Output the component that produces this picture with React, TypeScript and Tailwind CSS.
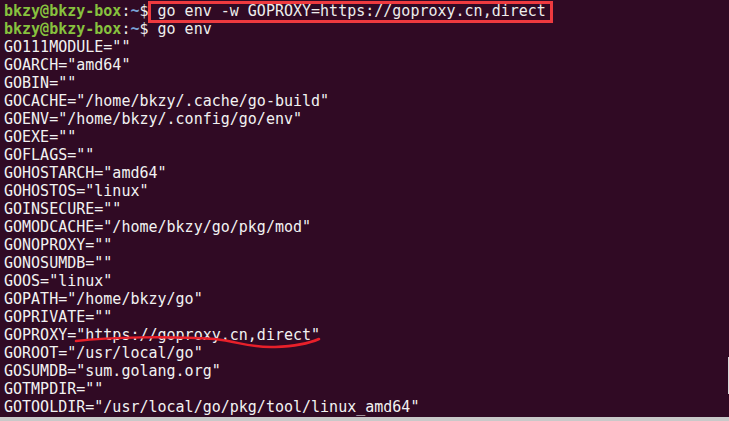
const PROMPT_USER = "bkzy@bkzy-box";

const LINES = [
  'GO111MODULE=""',
  'GOARCH="amd64"',
  'GOBIN=""',
  'GOCACHE="/home/bkzy/.cache/go-build"',
  'GOENV="/home/bkzy/.config/go/env"',
  'GOEXE=""',
  'GOFLAGS=""',
  'GOHOSTARCH="amd64"',
  'GOHOSTOS="linux"',
  'GOINSECURE=""',
  'GOMODCACHE="/home/bkzy/go/pkg/mod"',
  'GONOPROXY=""',
  'GONOSUMDB=""',
  'GOOS="linux"',
  'GOPATH="/home/bkzy/go"',
  'GOPRIVATE=""',
  'GOPROXY="https://goproxy.cn,direct"',
  'GOROOT="/usr/local/go"',
  'GOSUMDB="sum.golang.org"',
  'GOTMPDIR=""',
  'GOTOOLDIR="/usr/local/go/pkg/tool/linux_amd64"',
];

function Prompt({ cmd }: { cmd: string }) {
  return (
    <div className="whitespace-pre">
      <span className="font-bold text-[#87c13e]">{PROMPT_USER}</span>
      <span className="text-[#eeeeec]">:</span>
      <span className="font-bold text-[#7aa2d6]">~</span>
      <span className="text-[#eeeeec]">$ {cmd}</span>
    </div>
  );
}

export default function App() {
  return (
    <div className="flex h-[421px] w-[729px] flex-col overflow-hidden bg-[#c9c9c9]">
      <div
        className="relative h-[417px] bg-[#300a24] pl-[4px] pt-[2px] text-[15px] leading-[18px] text-[#f2f2f2]"
        style={{ fontFamily: '"DejaVu Sans Mono", "Liberation Mono", monospace' }}
      >
        <Prompt cmd="go env -w GOPROXY=https://goproxy.cn,direct" />
        <Prompt cmd="go env" />
        {LINES.map((l) => (
          <div key={l} className="whitespace-pre">
            {l}
          </div>
        ))}

        {/* recuadro rojo sobre el comando */}
        <div className="absolute left-[148px] top-[1px] h-[22px] w-[405px] border-[3px] border-[#ee3a3f]" />

        {/* subrayado a mano bajo GOPROXY */}
        <svg className="absolute left-0 top-0" width="729" height="417">
          <path
            d="M76 341 C 110 337, 170 336, 215 339 C 240 342, 250 348, 275 347 C 300 346, 310 343, 319 339"
            fill="none"
            stroke="#e8202a"
            strokeWidth="2.5"
            strokeLinecap="round"
          />
        </svg>

        <div className="absolute right-0 top-[357px] h-[37px] w-[1px] bg-[#d6d6d6]" />
      </div>
      <div className="h-[4px] bg-[#c9c9c9]" />
    </div>
  );
}
